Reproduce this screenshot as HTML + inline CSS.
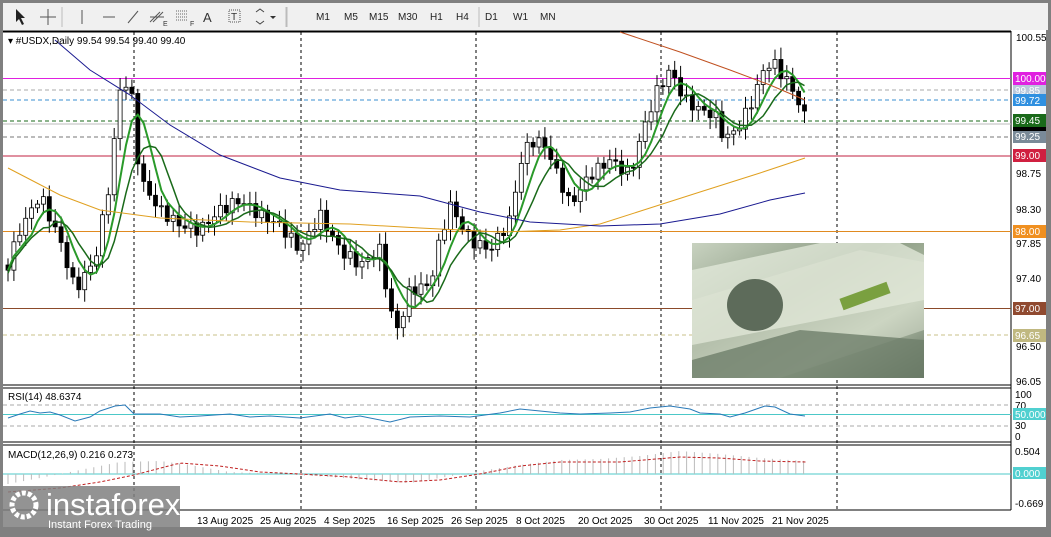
<!DOCTYPE html>
<html><head><meta charset="utf-8"><style>
body{margin:0;width:1051px;height:532px;overflow:hidden;background:#808080;font-family:"Liberation Sans",sans-serif}
</style></head><body>
<svg id="s" width="1051" height="532" xmlns="http://www.w3.org/2000/svg" font-family="Liberation Sans, sans-serif" font-size="10">
<rect x="0" y="0" width="1051" height="532" fill="#808080"/>
<rect x="3" y="3" width="1045" height="27" fill="#f0f0f0"/>
<g fill="#333" font-size="10">
<path d="M16 9 L16 22 L19 19 L22 25 L24 24 L21 18 L25 18 Z" fill="#222"/>
<path d="M48 9 V25 M40 17 H56" stroke="#555" fill="none"/>
<line x1="62" y1="7" x2="62" y2="27" stroke="#bbb"/>
<line x1="82" y1="10" x2="82" y2="24" stroke="#555"/>
<line x1="103" y1="17" x2="115" y2="17" stroke="#555"/>
<line x1="128" y1="23" x2="138" y2="11" stroke="#555"/>
<path d="M150 22 L160 12 M153 22 L163 12 M150 17 H164" stroke="#555" fill="none"/>
<text x="163" y="26" font-size="7">E</text>
<path d="M176 11 H188 M176 14 H188 M176 17 H188 M176 20 H188" stroke="#666" stroke-dasharray="1 1"/>
<text x="190" y="26" font-size="7">F</text>
<text x="203" y="22" font-size="13">A</text>
<rect x="229" y="10" width="11" height="12" fill="none" stroke="#555" stroke-dasharray="1 1"/><text x="231" y="20" font-size="10">T</text>
<path d="M256 12 L260 9 L264 12 M256 21 L260 24 L264 21" stroke="#444" fill="none"/><path d="M270 16 L276 16 L273 19 Z"/>
<line x1="286" y1="7" x2="286" y2="27" stroke="#bbb"/>
<line x1="287" y1="7" x2="287" y2="27" stroke="#bbb"/>
<g font-size="10" fill="#222">
<text x="316" y="20">M1</text><text x="344" y="20">M5</text><text x="369" y="20">M15</text><text x="398" y="20">M30</text><text x="430" y="20">H1</text><text x="456" y="20">H4</text>
<line x1="479" y1="7" x2="479" y2="27" stroke="#bbb"/>
<text x="485" y="20">D1</text><text x="513" y="20">W1</text><text x="540" y="20">MN</text></g>
</g>
<rect x="3" y="30" width="1043" height="497" fill="#fff"/>
<line x1="3" y1="31.5" x2="1011" y2="31.5" stroke="#000" stroke-width="2"/>
<line x1="1011" y1="31" x2="1011" y2="510" stroke="#000"/>
<line x1="3" y1="385" x2="1011" y2="385" stroke="#000"/>
<line x1="3" y1="388" x2="1011" y2="388" stroke="#000"/>
<line x1="3" y1="442" x2="1011" y2="442" stroke="#000"/>
<line x1="3" y1="445" x2="1011" y2="445" stroke="#000"/>
<line x1="3" y1="510" x2="1011" y2="510" stroke="#000"/>
<g stroke="#000" stroke-dasharray="3 3"><line x1="134" y1="32" x2="134" y2="510"/><line x1="301" y1="32" x2="301" y2="510"/><line x1="476" y1="32" x2="476" y2="510"/><line x1="661" y1="32" x2="661" y2="510"/><line x1="837" y1="32" x2="837" y2="510"/></g>
<line x1="3" y1="78.5" x2="1011" y2="78.5" stroke="#e020e0"/>
<line x1="3" y1="90" x2="1011" y2="90" stroke="#aaa" stroke-dasharray="4 3"/>
<line x1="3" y1="100" x2="1011" y2="100" stroke="#3a8fd0" stroke-dasharray="4 3"/>
<line x1="3" y1="121" x2="1011" y2="121" stroke="#1a6a1a" stroke-dasharray="4 3"/>
<line x1="3" y1="124" x2="1011" y2="124" stroke="#bbb"/>
<line x1="3" y1="137" x2="1011" y2="137" stroke="#777" stroke-dasharray="4 3"/>
<line x1="3" y1="156" x2="1011" y2="156" stroke="#c02040"/>
<line x1="3" y1="231.5" x2="1011" y2="231.5" stroke="#e08a20"/>
<line x1="3" y1="308.5" x2="1011" y2="308.5" stroke="#8b4a2a"/>
<line x1="3" y1="335" x2="1011" y2="335" stroke="#c8c08a" stroke-dasharray="4 3"/>
<g id="chart"></g>
<defs><linearGradient id="g1" x1="0" y1="0" x2="1" y2="1"><stop offset="0" stop-color="#c8d2c0"/><stop offset=".4" stop-color="#8a9a82"/><stop offset=".7" stop-color="#b8c4ae"/><stop offset="1" stop-color="#5a6a58"/></linearGradient></defs>
<rect x="692" y="243" width="232" height="135" fill="url(#g1)"/>
<path d="M692 270 L820 243 L900 243 L924 255 L924 300 L692 345Z" fill="#e4ebdc" opacity=".75"/>
<path d="M692 300 L860 250 L924 262 L924 330 L780 378 L692 378Z" fill="#dfe6d6" opacity=".5"/>
<ellipse cx="755" cy="305" rx="28" ry="26" fill="#5d6b5a"/>
<rect x="840" y="290" width="50" height="12" fill="#7aa040" transform="rotate(-20 865 296)"/>
<path d="M692 360 L800 330 L924 340 L924 378 L692 378Z" fill="#6e7e6a" opacity=".8"/>
<line x1="3" y1="405" x2="1011" y2="405" stroke="#aaa" stroke-dasharray="4 3"/>
<line x1="3" y1="426" x2="1011" y2="426" stroke="#aaa" stroke-dasharray="4 3"/>
<line x1="3" y1="414.5" x2="1011" y2="414.5" stroke="#4cc8c8"/>
<polyline fill="none" stroke="#2a7ab8" points="8,418 20,414 30,411 40,413 50,412 60,415 75,421 90,417 100,411 115,406 125,405 134,414 160,414 180,417 200,416 230,414 250,417 270,416 300,418 330,414 345,418 360,416 390,422 410,417 440,416 470,417 500,413 520,409 540,411 560,413 580,414 610,413 630,412 650,408 670,406 690,409 700,413 720,414 730,417 745,413 765,406 775,407 790,414 805,416"/>
<text x="8" y="400" fill="#000">RSI(14) 48.6374</text>
<line x1="3" y1="474" x2="1011" y2="474" stroke="#4cc8c8"/>
<g id="macd"></g>
<text x="8" y="458" fill="#000">MACD(12,26,9) 0.216 0.273</text>
<text x="8" y="44" fill="#000">▾ #USDX,Daily  99.54 99.54 99.40 99.40</text>
<g font-size="10" fill="#000">
<text x="1016" y="41">100.55</text><text x="1016" y="89">99.85</text><text x="1016" y="128">99.46</text><text x="1016" y="177">98.75</text><text x="1016" y="213">98.30</text><text x="1016" y="247">97.85</text><text x="1016" y="282">97.40</text><text x="1016" y="350">96.50</text><text x="1016" y="385">96.05</text>
<text x="1015" y="398">100</text><text x="1015" y="409">70</text><text x="1015" y="429">30</text><text x="1015" y="440">0</text>
<text x="1015" y="455">0.504</text><text x="1015" y="507">-0.669</text>
</g>
<g font-size="10" fill="#fff">
<rect x="1013" y="72" width="33" height="13" fill="#e020e0"/><text x="1015" y="82">100.00</text>
<rect x="1013" y="85" width="33" height="10" fill="#b8c8dc"/><text x="1015" y="94">99.85</text>
<rect x="1013" y="94" width="33" height="12" fill="#3090e0"/><text x="1015" y="104">99.72</text>
<rect x="1013" y="114" width="33" height="13" fill="#1a6a1a"/><text x="1015" y="124">99.45</text>
<rect x="1013" y="127" width="33" height="4" fill="#000"/>
<rect x="1013" y="131" width="33" height="12" fill="#7a8a98"/><text x="1015" y="140">99.25</text>
<rect x="1013" y="149" width="33" height="13" fill="#d02040"/><text x="1015" y="159">99.00</text>
<rect x="1013" y="225" width="33" height="13" fill="#f09020"/><text x="1015" y="235">98.00</text>
<rect x="1013" y="302" width="33" height="13" fill="#904a30"/><text x="1015" y="312">97.00</text>
<rect x="1013" y="329" width="33" height="13" fill="#c0b880"/><text x="1015" y="339">96.65</text>
<rect x="1013" y="408" width="33" height="12" fill="#50d0d0"/><text x="1015" y="418">50.000</text>
<rect x="1013" y="467" width="33" height="12" fill="#50d0d0"/><text x="1015" y="477">0.000</text>
</g>
<g font-size="10" fill="#000">
<text x="197" y="524">13 Aug 2025</text><text x="260" y="524">25 Aug 2025</text><text x="324" y="524">4 Sep 2025</text><text x="387" y="524">16 Sep 2025</text><text x="451" y="524">26 Sep 2025</text><text x="516" y="524">8 Oct 2025</text><text x="578" y="524">20 Oct 2025</text><text x="644" y="524">30 Oct 2025</text><text x="708" y="524">11 Nov 2025</text><text x="772" y="524">21 Nov 2025</text>
</g>
<rect x="0" y="486" width="180" height="46" fill="#808080" opacity=".85"/>
<circle cx="24" cy="505" r="12" fill="none" stroke="#fff" stroke-width="5" stroke-dasharray="4 2"/>
<text x="46" y="515" font-size="31" fill="#fff">instaforex</text>
<text x="48" y="528" font-size="11" fill="#fff">Instant Forex Trading</text>
</svg>
<script>
var pts=[[8,265],[20,230],[40,195],[60,240],[75,290],[95,260],[110,180],[120,90],[130,80],[140,180],[160,210],[180,225],[200,230],[220,210],[240,200],[260,215],[280,225],[300,250],[320,215],[340,250],[360,265],[380,250],[390,310],[398,330],[410,290],[430,285],[440,240],[450,205],[470,240],[490,250],[510,220],[520,165],[530,140],[545,145],[560,180],[570,205],[590,175],[610,160],[630,175],[640,140],[655,95],[670,70],[685,100],[700,110],[715,115],[725,140],[740,125],[755,95],[765,65],[775,65],[790,85],[800,105],[806,120]];
function yAt(x){for(var i=1;i<pts.length;i++){if(x<=pts[i][0]){var a=pts[i-1],b=pts[i];return a[1]+(b[1]-a[1])*(x-a[0])/(b[0]-a[0]);}}return 120;}
function interp(P,x){if(x<=P[0][0])return P[0][1];for(var i=1;i<P.length;i++){if(x<=P[i][0]){var a=P[i-1],b=P[i];return a[1]+(b[1]-a[1])*(x-a[0])/(b[0]-a[0]);}}return P[P.length-1][1];}
var g=document.getElementById('chart'),h='';
var prev=yAt(8),cl=[];
for(var x=8;x<=806;x+=5.9){var c=yAt(x)+Math.sin(x*1.7)*6;var o=prev;var hi=Math.min(o,c)-4-Math.abs(Math.sin(x*3.1))*8,lo=Math.max(o,c)+4+Math.abs(Math.cos(x*2.3))*8;
h+='<line x1="'+x+'" y1="'+hi+'" x2="'+x+'" y2="'+lo+'" stroke="#000"/>';
var t=Math.min(o,c),bh=Math.max(1,Math.abs(o-c));
h+='<rect x="'+(x-2)+'" y="'+t+'" width="4" height="'+bh+'" fill="'+(c<o?'#fff':'#000')+'" stroke="#000" stroke-width="0.8"/>';
cl.push([x,c]);prev=c;}
function ma(n,off){var s='';for(var i=0;i<cl.length;i++){var a=0,k=0;for(var j=Math.max(0,i-n+1);j<=i;j++){a+=cl[j][1];k++;}s+=cl[i][0]+','+(a/k+off)+' ';}return s;}
h+='<polyline fill="none" stroke="#2a9a2a" stroke-width="2" points="'+ma(5,0)+'"/>';
h+='<polyline fill="none" stroke="#1a6a1a" stroke-width="1.5" points="'+ma(8,3)+'"/>';
h+='<polyline fill="none" stroke="#e0a020" points="8,168 60,195 100,210 160,218 250,222 350,224 420,228 500,232 560,230 600,224 650,208 700,192 760,173 805,158"/>';
h+='<polyline fill="none" stroke="#1a1a90" points="55,40 90,70 130,95 170,125 220,155 280,178 340,190 420,196 480,212 530,222 600,226 660,224 720,214 770,200 805,193"/>';
h+='<polyline fill="none" stroke="#c05020" points="620,32 680,52 730,70 770,85 805,100"/>';
g.innerHTML=h;
var histP=[[8,484],[40,478],[80,470],[120,462],[160,461],[190,465],[230,472],[280,474],[330,477],[380,481],[410,483],[440,478],[480,471],[520,465],[560,460],[600,459],[640,456],[680,451],[720,454],[760,458],[805,461]];
var sigP=[[8,492],[60,488],[100,482],[134,475],[180,463],[220,466],[260,472],[300,474],[350,477],[400,482],[440,480],[480,474],[520,466],[560,462],[620,462],[680,457],[720,458],[760,461],[805,462]];
var m='',sig=[];
for(var x=8;x<=806;x+=7.8){var hh=interp(histP,x);m+='<line x1="'+x+'" y1="474" x2="'+x+'" y2="'+hh+'" stroke="#bbb"/>';}
for(var x=8;x<=806;x+=6){sig.push(x+','+interp(sigP,x));}
m+='<polyline fill="none" stroke="#c02020" stroke-dasharray="3 2" points="'+sig.join(' ')+'"/>';
document.getElementById('macd').innerHTML=m;
</script>
</body></html>
